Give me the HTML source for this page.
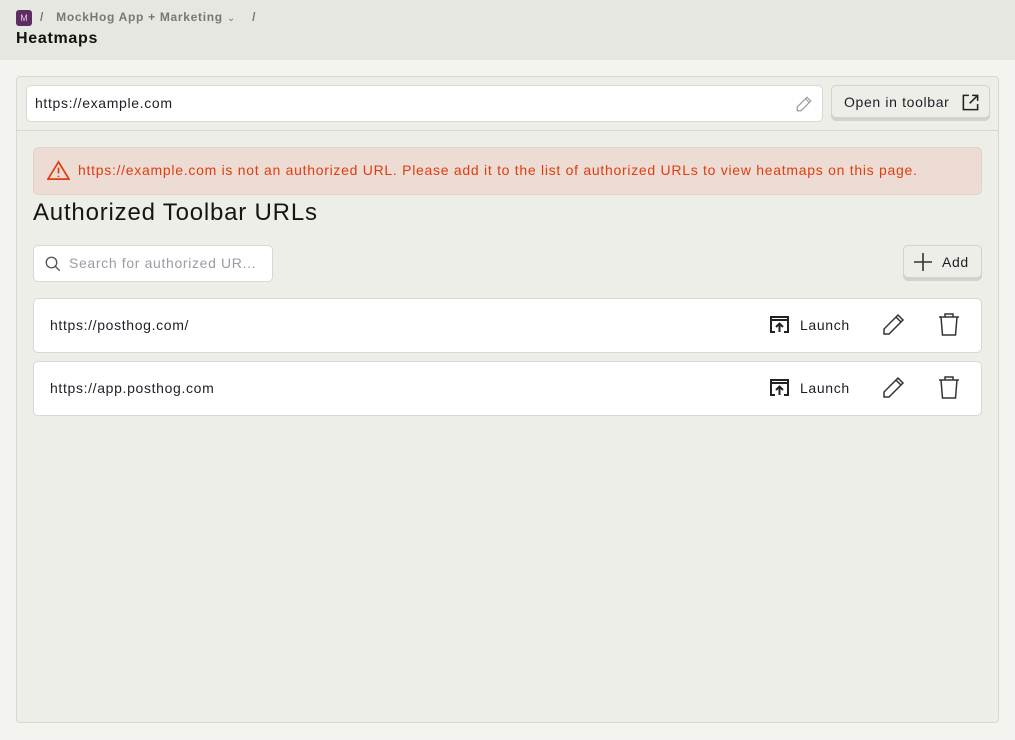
<!DOCTYPE html>
<html><head><style>
*{box-sizing:border-box;margin:0;padding:0}
body{width:1015px;height:740px;background:#f3f3ef;font-family:"Liberation Sans",sans-serif;color:#1d1f27;position:relative;overflow:hidden;letter-spacing:0.65px}
.hdr{position:absolute;left:0;top:0;width:1015px;height:60px;background:#e7e7e2}
.abs{position:absolute}
.panel{position:absolute;left:16px;top:76px;width:983px;height:647px;background:#eeeee9;border:1px solid #d8d8d2;border-radius:4px}
.box{position:absolute;background:#fff;border:1px solid #d8d8d2;border-radius:5px}
.btn{position:absolute;background:#eeeee9;border:1px solid #d3d3cd;border-radius:5px;box-shadow:0 3px 0 #d3d3cd;font-size:14px}
</style></head><body>
<div class="hdr">
<div class="abs" style="left:16px;top:10px;width:16px;height:16px;background:#5b2d62;border-radius:3px;color:#e8c8ea;font-size:9px;text-align:center;line-height:16px;letter-spacing:0">M</div>
<div class="abs" style="left:40px;top:10px;font-size:12px;font-weight:bold;color:#777;letter-spacing:0.7px">/&nbsp;&nbsp;&nbsp;MockHog App + Marketing <span style="font-weight:normal;font-size:10px">&#8964;</span>&nbsp;&nbsp;&nbsp;&nbsp;/</div>
<div class="abs" style="left:16px;top:30px;font-size:16px;font-weight:bold;color:#111;letter-spacing:0.7px">Heatmaps</div>
</div>
<div class="panel"></div>
<div class="box" style="left:26px;top:85px;width:797px;height:37px;font-size:14px;padding:9px 8px">https://example.com
<svg class="abs" style="right:9px;top:9px" width="18" height="18" viewBox="0 0 24 24" fill="none" stroke="#999" stroke-width="1.6"><path d="M16 3l5 5L8 21H3v-5z M14 5l5 5"/></svg></div>
<div class="btn" style="left:831px;top:85px;width:159px;height:33px;padding:8px 12px">Open in toolbar
<svg class="abs" style="right:9px;top:7px" width="19" height="19" viewBox="0 0 24 24" fill="none" stroke="#222" stroke-width="2"><path d="M10 3H3v18h18v-7M14 3h7v7M21 3L11 13"/></svg></div>
<div class="abs" style="left:17px;top:130px;width:981px;height:1px;background:#d8d8d2"></div>
<div class="abs" style="left:33px;top:147px;width:949px;height:48px;background:#ecdcd3;border:1px solid #e4d2c8;border-radius:5px;color:#e03d11;font-size:14px;padding:14px 0 0 44px;letter-spacing:0.72px;white-space:nowrap">https://example.com is not an authorized URL. Please add it to the list of authorized URLs to view heatmaps on this page.
<svg class="abs" style="left:13px;top:12px" width="23" height="21" viewBox="0 0 24 22" fill="none" stroke="#e03d11" stroke-width="1.8"><path d="M12 2L1 20h22z"/><path d="M12 8v6M12 16.5v1.5"/></svg></div>
<div class="abs" style="left:33px;top:199px;font-size:24px;color:#151515;letter-spacing:0.8px">Authorized Toolbar URLs</div>
<div class="box" style="left:33px;top:245px;width:240px;height:37px;font-size:14px;color:#9a9ca6;padding:9px 0 0 35px;white-space:nowrap">Search for authorized UR...
<svg class="abs" style="left:10px;top:9px" width="18" height="18" viewBox="0 0 24 24" fill="none" stroke="#555" stroke-width="1.8"><circle cx="10" cy="10" r="7"/><path d="M15 15l6 6"/></svg></div>
<div class="btn" style="left:903px;top:245px;width:79px;height:33px;padding:8px 0 0 38px">Add
<svg class="abs" style="left:9px;top:6px" width="20" height="20" viewBox="0 0 20 20" stroke="#333" stroke-width="1.6"><path d="M10 1v18M1 10h18"/></svg></div>
<div class="box" style="left:33px;top:298px;width:949px;height:55px;font-size:14px;padding:18px 0 0 16px">https://posthog.com/</div>
<div class="box" style="left:33px;top:361px;width:949px;height:55px;font-size:14px;padding:18px 0 0 16px">https://app.posthog.com</div>
<div class="abs" style="left:0;top:298px;width:1015px;height:130px;font-size:14px">
 <div class="abs" style="left:800px;top:19px">Launch</div>
 <div class="abs" style="left:800px;top:82px">Launch</div>
</div>
<svg class="abs" style="left:769px;top:315px" width="22" height="100" viewBox="0 0 22 100" fill="none" stroke="#222" stroke-width="2">
<path d="M6 17H2V2h17v15h-4M2 5h17M10.5 17V9M7 12l3.5-3.5L14 12"/>
<path transform="translate(0,63)" d="M6 17H2V2h17v15h-4M2 5h17M10.5 17V9M7 12l3.5-3.5L14 12"/></svg>
<svg class="abs" style="left:881px;top:313px" width="24" height="90" viewBox="0 0 24 90" fill="none" stroke="#333" stroke-width="1.5">
<path d="M17 2l5 5L8 21H3v-5z M15 4l5 5"/><path transform="translate(0,63)" d="M17 2l5 5L8 21H3v-5z M15 4l5 5"/></svg>
<svg class="abs" style="left:938px;top:313px" width="22" height="90" viewBox="0 0 22 90" fill="none" stroke="#333" stroke-width="1.5">
<path d="M1 4h20M7 4V1h8v3M3 4l1.5 18h13L19 4"/><path transform="translate(0,63)" d="M1 4h20M7 4V1h8v3M3 4l1.5 18h13L19 4"/></svg>
</body></html>
